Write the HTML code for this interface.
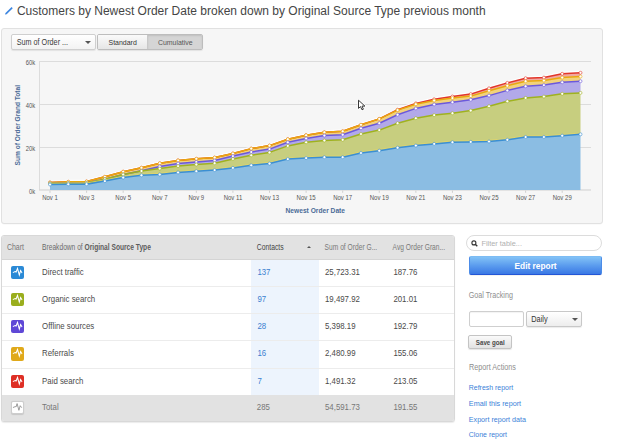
<!DOCTYPE html>
<html><head><meta charset="utf-8"><style>
*{box-sizing:border-box;margin:0;padding:0}
html,body{width:639px;height:443px;overflow:hidden;background:#fff;font-family:"Liberation Sans", sans-serif;position:relative}
.abs{position:absolute}
.panel{position:absolute;left:1px;top:27.9px;width:601.5px;height:196.1px;background:#f6f6f6;border:1px solid #e1e1e1;border-radius:3px;box-shadow:0 0.5px 0.5px rgba(0,0,0,0.04)}
.dd{position:absolute;left:11px;top:34.1px;width:85px;height:15.8px;background:linear-gradient(#fff,#f3f3f3);border:1px solid #cfcfcf;border-radius:2px;box-shadow:0 1px 1px rgba(0,0,0,0.08)}
.arrow{position:absolute;width:0;height:0;border-left:2.4px solid transparent;border-right:2.4px solid transparent;border-top:2.8px solid #555}
.btns{position:absolute;left:97.3px;top:34.1px;width:105.7px;height:15.6px;border:1px solid #bdbdbd;border-radius:2px;overflow:hidden;box-shadow:0 1px 1px rgba(0,0,0,0.08)}
.b1{position:absolute;left:0;top:0;width:49.9px;height:14px;background:linear-gradient(#fafafa,#e6e6e6);border-right:1px solid #c8c8c8}
.b2{position:absolute;left:49.9px;top:0;width:54px;height:14px;background:#d5d5d5;box-shadow:inset 0 1px 2px rgba(0,0,0,0.1)}
.table{position:absolute;left:1.3px;top:235.3px;width:453.3px;height:186.5px;border:1px solid #d8d8d8;border-radius:3px;overflow:hidden;background:#fff;box-shadow:0 1px 1px rgba(0,0,0,0.08)}
.thead{position:absolute;left:0;top:0;width:100%;height:23.5px;background:#e2e2e2;border-bottom:1px solid #d4d4d4}
.hl{position:absolute;left:248.3px;top:23.5px;width:68.6px;height:136px;background:#edf4fd}
.row{position:absolute;left:0;width:100%;height:27.3px;border-bottom:1px solid #ececec}
.row.total{background:#e2e2e2;height:26px;border-bottom:none}
.ic{position:absolute;left:8.9px;top:6.2px;width:13.3px;height:13.3px;border-radius:2px}
.search{position:absolute;left:465.9px;top:235.2px;width:136.1px;height:15.5px;border:1px solid #dcdcdc;border-radius:8px;background:#fff}
.edit{position:absolute;left:468.9px;top:255.8px;width:133.1px;height:18.8px;border-radius:2px;background:linear-gradient(#82c2f6,#5b9cee 50%,#3a78e4);border:1px solid #4c8ce8;border-top-color:#7dbcf4;border-bottom-color:#2356d6;box-shadow:0 0.5px 0.5px rgba(0,0,0,0.1)}
.inp{position:absolute;left:468.8px;top:311.1px;width:55.2px;height:15.6px;border:1px solid #cfcfcf;border-radius:2px;background:#fff;box-shadow:inset 0 1px 1px rgba(0,0,0,0.05)}
.sel{position:absolute;left:526.4px;top:311.1px;width:55.2px;height:15.6px;border:1px solid #c8c8c8;border-radius:2px;background:linear-gradient(#fff,#ededed);box-shadow:0 1px 1px rgba(0,0,0,0.08)}
.save{position:absolute;left:468.3px;top:335.2px;width:43.5px;height:13.4px;border:1px solid #c4c4c4;border-radius:2px;background:linear-gradient(#fafafa,#e2e2e2);box-shadow:0 1px 1px rgba(0,0,0,0.1)}
</style></head><body>
<svg class="abs" style="left:0;top:0" width="16" height="18" viewBox="0 0 16 18"><polygon points="5,14.6 6.67,14.16 12.76,8.24 11.58,7.02 5.49,12.94" fill="#3d86e0"/></svg>
<div class="panel"></div>
<div class="dd"><div class="arrow" style="left:73.2px;top:6.0px;border-left-width:3px;border-right-width:3px;border-top-width:3.4px"></div></div>
<div class="btns"><div class="b1"></div><div class="b2"></div></div>
<svg width="639" height="443" viewBox="0 0 639 443" style="position:absolute;left:0;top:0">
<line x1="39.5" y1="61.5" x2="591" y2="61.5" stroke="#dcdcdc" stroke-width="1"/><line x1="39.5" y1="104.5" x2="591" y2="104.5" stroke="#dcdcdc" stroke-width="1"/><line x1="39.5" y1="147.5" x2="591" y2="147.5" stroke="#dcdcdc" stroke-width="1"/><line x1="39.5" y1="61" x2="39.5" y2="190.5" stroke="#dcdcdc" stroke-width="1"/><line x1="39.5" y1="190.0" x2="591" y2="190.0" stroke="#cfcfcf" stroke-width="1"/>
<polygon points="50.00,184.50 68.29,184.30 86.59,184.20 104.88,181.10 123.17,177.60 141.47,175.30 159.76,174.50 178.05,172.40 196.34,171.20 214.64,170.10 232.93,167.90 251.22,165.30 269.52,163.60 287.81,159.10 306.10,158.10 324.40,157.20 342.69,157.20 360.98,153.00 379.28,150.70 397.57,147.70 415.86,145.60 434.16,143.90 452.45,142.20 470.74,141.90 489.03,141.50 507.33,139.80 525.62,137.00 543.91,137.00 562.21,135.70 580.50,134.30 580.50,189.90 562.21,189.90 543.91,189.90 525.62,189.90 507.33,189.90 489.03,189.90 470.74,189.90 452.45,189.90 434.16,189.90 415.86,189.90 397.57,189.90 379.28,189.90 360.98,189.90 342.69,189.90 324.40,189.90 306.10,189.90 287.81,189.90 269.52,189.90 251.22,189.90 232.93,189.90 214.64,189.90 196.34,189.90 178.05,189.90 159.76,189.90 141.47,189.90 123.17,189.90 104.88,189.90 86.59,189.90 68.29,189.90 50.00,189.90" fill="#8bbde3"/>
<polygon points="50.00,183.50 68.29,183.20 86.59,183.00 104.88,179.20 123.17,174.50 141.47,171.00 159.76,168.60 178.05,166.10 196.34,164.50 214.64,163.20 232.93,159.00 251.22,155.30 269.52,152.40 287.81,145.90 306.10,142.30 324.40,140.50 342.69,139.80 360.98,134.00 379.28,130.10 397.57,123.20 415.86,118.20 434.16,115.10 452.45,113.20 470.74,110.60 489.03,106.20 507.33,101.30 525.62,97.90 543.91,96.60 562.21,93.80 580.50,92.90 580.50,134.30 562.21,135.70 543.91,137.00 525.62,137.00 507.33,139.80 489.03,141.50 470.74,141.90 452.45,142.20 434.16,143.90 415.86,145.60 397.57,147.70 379.28,150.70 360.98,153.00 342.69,157.20 324.40,157.20 306.10,158.10 287.81,159.10 269.52,163.60 251.22,165.30 232.93,167.90 214.64,170.10 196.34,171.20 178.05,172.40 159.76,174.50 141.47,175.30 123.17,177.60 104.88,181.10 86.59,184.20 68.29,184.30 50.00,184.50" fill="#c7ce7f"/>
<polygon points="50.00,183.50 68.29,183.20 86.59,183.00 104.88,179.20 123.17,174.50 141.47,170.80 159.76,166.40 178.05,163.50 196.34,161.90 214.64,160.60 232.93,156.10 251.22,152.00 269.52,149.10 287.81,142.30 306.10,138.40 324.40,135.60 342.69,134.70 360.98,128.30 379.28,123.20 397.57,114.70 415.86,108.40 434.16,104.40 452.45,102.20 470.74,99.70 489.03,95.60 507.33,90.40 525.62,86.30 543.91,85.10 562.21,82.30 580.50,81.20 580.50,92.90 562.21,93.80 543.91,96.60 525.62,97.90 507.33,101.30 489.03,106.20 470.74,110.60 452.45,113.20 434.16,115.10 415.86,118.20 397.57,123.20 379.28,130.10 360.98,134.00 342.69,139.80 324.40,140.50 306.10,142.30 287.81,145.90 269.52,152.40 251.22,155.30 232.93,159.00 214.64,163.20 196.34,164.50 178.05,166.10 159.76,168.60 141.47,171.00 123.17,174.50 104.88,179.20 86.59,183.00 68.29,183.20 50.00,183.50" fill="#b2a9e9"/>
<polygon points="50.00,182.50 68.29,181.80 86.59,181.50 104.88,176.80 123.17,171.70 141.47,167.80 159.76,163.30 178.05,160.40 196.34,158.80 214.64,157.60 232.93,153.50 251.22,148.60 269.52,145.60 287.81,139.20 306.10,135.20 324.40,132.30 342.69,131.30 360.98,124.80 379.28,118.90 397.57,110.10 415.86,104.20 434.16,100.50 452.45,98.10 470.74,96.10 489.03,90.70 507.33,85.70 525.62,81.20 543.91,80.60 562.21,77.60 580.50,76.50 580.50,81.20 562.21,82.30 543.91,85.10 525.62,86.30 507.33,90.40 489.03,95.60 470.74,99.70 452.45,102.20 434.16,104.40 415.86,108.40 397.57,114.70 379.28,123.20 360.98,128.30 342.69,134.70 324.40,135.60 306.10,138.40 287.81,142.30 269.52,149.10 251.22,152.00 232.93,156.10 214.64,160.60 196.34,161.90 178.05,163.50 159.76,166.40 141.47,170.80 123.17,174.50 104.88,179.20 86.59,183.00 68.29,183.20 50.00,183.50" fill="#f1d27c"/>
<polygon points="50.00,182.50 68.29,181.80 86.59,181.50 104.88,176.80 123.17,171.70 141.47,167.80 159.76,163.30 178.05,160.40 196.34,158.80 214.64,157.60 232.93,153.50 251.22,148.60 269.52,145.60 287.81,139.20 306.10,135.20 324.40,132.30 342.69,131.30 360.98,124.80 379.28,118.90 397.57,109.70 415.86,103.40 434.16,99.30 452.45,96.50 470.74,94.10 489.03,88.30 507.33,82.90 525.62,78.20 543.91,77.60 562.21,73.80 580.50,72.80 580.50,76.50 562.21,77.60 543.91,80.60 525.62,81.20 507.33,85.70 489.03,90.70 470.74,96.10 452.45,98.10 434.16,100.50 415.86,104.20 397.57,110.10 379.28,118.90 360.98,124.80 342.69,131.30 324.40,132.30 306.10,135.20 287.81,139.20 269.52,145.60 251.22,148.60 232.93,153.50 214.64,157.60 196.34,158.80 178.05,160.40 159.76,163.30 141.47,167.80 123.17,171.70 104.88,176.80 86.59,181.50 68.29,181.80 50.00,182.50" fill="#f0a8a0"/>
<polyline points="50.00,181.10 68.29,180.40 86.59,180.10 104.88,175.40 123.17,170.30 141.47,166.40 159.76,161.90 178.05,159.00 196.34,157.40 214.64,156.20 232.93,152.10 251.22,147.20 269.52,144.20 287.81,137.80 306.10,133.80 324.40,130.90 342.69,129.90 360.98,123.40 379.28,117.50 397.57,108.30 415.86,102.00 434.16,97.90 452.45,95.10 470.74,92.70 489.03,86.90 507.33,81.50 525.62,76.80 543.91,76.20 562.21,72.40 580.50,71.40" fill="none" stroke="#ffffff" stroke-width="1.2" stroke-opacity="0.85" stroke-linejoin="round"/>
<polyline points="50.00,182.50 68.29,181.80 86.59,181.50 104.88,176.80 123.17,171.70 141.47,167.80 159.76,163.30 178.05,160.40 196.34,158.80 214.64,157.60 232.93,153.50 251.22,148.60 269.52,145.60 287.81,139.20 306.10,135.20 324.40,132.30 342.69,131.30 360.98,124.80 379.28,118.90 397.57,109.70 415.86,103.40 434.16,99.30 452.45,96.50 470.74,94.10 489.03,88.30 507.33,82.90 525.62,78.20 543.91,77.60 562.21,73.80 580.50,72.80" fill="none" stroke="#e2362a" stroke-width="1.5" stroke-linejoin="round"/>
<circle cx="50.00" cy="182.50" r="1.5" fill="#fff" stroke="#e2362a" stroke-width="0.6"/>
<circle cx="68.29" cy="181.80" r="1.5" fill="#fff" stroke="#e2362a" stroke-width="0.6"/>
<circle cx="86.59" cy="181.50" r="1.5" fill="#fff" stroke="#e2362a" stroke-width="0.6"/>
<circle cx="104.88" cy="176.80" r="1.5" fill="#fff" stroke="#e2362a" stroke-width="0.6"/>
<circle cx="123.17" cy="171.70" r="1.5" fill="#fff" stroke="#e2362a" stroke-width="0.6"/>
<circle cx="141.47" cy="167.80" r="1.5" fill="#fff" stroke="#e2362a" stroke-width="0.6"/>
<circle cx="159.76" cy="163.30" r="1.5" fill="#fff" stroke="#e2362a" stroke-width="0.6"/>
<circle cx="178.05" cy="160.40" r="1.5" fill="#fff" stroke="#e2362a" stroke-width="0.6"/>
<circle cx="196.34" cy="158.80" r="1.5" fill="#fff" stroke="#e2362a" stroke-width="0.6"/>
<circle cx="214.64" cy="157.60" r="1.5" fill="#fff" stroke="#e2362a" stroke-width="0.6"/>
<circle cx="232.93" cy="153.50" r="1.5" fill="#fff" stroke="#e2362a" stroke-width="0.6"/>
<circle cx="251.22" cy="148.60" r="1.5" fill="#fff" stroke="#e2362a" stroke-width="0.6"/>
<circle cx="269.52" cy="145.60" r="1.5" fill="#fff" stroke="#e2362a" stroke-width="0.6"/>
<circle cx="287.81" cy="139.20" r="1.5" fill="#fff" stroke="#e2362a" stroke-width="0.6"/>
<circle cx="306.10" cy="135.20" r="1.5" fill="#fff" stroke="#e2362a" stroke-width="0.6"/>
<circle cx="324.40" cy="132.30" r="1.5" fill="#fff" stroke="#e2362a" stroke-width="0.6"/>
<circle cx="342.69" cy="131.30" r="1.5" fill="#fff" stroke="#e2362a" stroke-width="0.6"/>
<circle cx="360.98" cy="124.80" r="1.5" fill="#fff" stroke="#e2362a" stroke-width="0.6"/>
<circle cx="379.28" cy="118.90" r="1.5" fill="#fff" stroke="#e2362a" stroke-width="0.6"/>
<circle cx="397.57" cy="109.70" r="1.5" fill="#fff" stroke="#e2362a" stroke-width="0.6"/>
<circle cx="415.86" cy="103.40" r="1.5" fill="#fff" stroke="#e2362a" stroke-width="0.6"/>
<circle cx="434.16" cy="99.30" r="1.5" fill="#fff" stroke="#e2362a" stroke-width="0.6"/>
<circle cx="452.45" cy="96.50" r="1.5" fill="#fff" stroke="#e2362a" stroke-width="0.6"/>
<circle cx="470.74" cy="94.10" r="1.5" fill="#fff" stroke="#e2362a" stroke-width="0.6"/>
<circle cx="489.03" cy="88.30" r="1.5" fill="#fff" stroke="#e2362a" stroke-width="0.6"/>
<circle cx="507.33" cy="82.90" r="1.5" fill="#fff" stroke="#e2362a" stroke-width="0.6"/>
<circle cx="525.62" cy="78.20" r="1.5" fill="#fff" stroke="#e2362a" stroke-width="0.6"/>
<circle cx="543.91" cy="77.60" r="1.5" fill="#fff" stroke="#e2362a" stroke-width="0.6"/>
<circle cx="562.21" cy="73.80" r="1.5" fill="#fff" stroke="#e2362a" stroke-width="0.6"/>
<circle cx="580.50" cy="72.80" r="1.5" fill="#fff" stroke="#e2362a" stroke-width="0.6"/>
<polyline points="50.00,182.50 68.29,181.80 86.59,181.50 104.88,176.80 123.17,171.70 141.47,167.80 159.76,163.30 178.05,160.40 196.34,158.80 214.64,157.60 232.93,153.50 251.22,148.60 269.52,145.60 287.81,139.20 306.10,135.20 324.40,132.30 342.69,131.30 360.98,124.80 379.28,118.90 397.57,110.10 415.86,104.20 434.16,100.50 452.45,98.10 470.74,96.10 489.03,90.70 507.33,85.70 525.62,81.20 543.91,80.60 562.21,77.60 580.50,76.50" fill="none" stroke="#e9a90e" stroke-width="1.5" stroke-linejoin="round"/>
<circle cx="50.00" cy="182.50" r="1.5" fill="#fff" stroke="#e9a90e" stroke-width="0.6"/>
<circle cx="68.29" cy="181.80" r="1.5" fill="#fff" stroke="#e9a90e" stroke-width="0.6"/>
<circle cx="86.59" cy="181.50" r="1.5" fill="#fff" stroke="#e9a90e" stroke-width="0.6"/>
<circle cx="104.88" cy="176.80" r="1.5" fill="#fff" stroke="#e9a90e" stroke-width="0.6"/>
<circle cx="123.17" cy="171.70" r="1.5" fill="#fff" stroke="#e9a90e" stroke-width="0.6"/>
<circle cx="141.47" cy="167.80" r="1.5" fill="#fff" stroke="#e9a90e" stroke-width="0.6"/>
<circle cx="159.76" cy="163.30" r="1.5" fill="#fff" stroke="#e9a90e" stroke-width="0.6"/>
<circle cx="178.05" cy="160.40" r="1.5" fill="#fff" stroke="#e9a90e" stroke-width="0.6"/>
<circle cx="196.34" cy="158.80" r="1.5" fill="#fff" stroke="#e9a90e" stroke-width="0.6"/>
<circle cx="214.64" cy="157.60" r="1.5" fill="#fff" stroke="#e9a90e" stroke-width="0.6"/>
<circle cx="232.93" cy="153.50" r="1.5" fill="#fff" stroke="#e9a90e" stroke-width="0.6"/>
<circle cx="251.22" cy="148.60" r="1.5" fill="#fff" stroke="#e9a90e" stroke-width="0.6"/>
<circle cx="269.52" cy="145.60" r="1.5" fill="#fff" stroke="#e9a90e" stroke-width="0.6"/>
<circle cx="287.81" cy="139.20" r="1.5" fill="#fff" stroke="#e9a90e" stroke-width="0.6"/>
<circle cx="306.10" cy="135.20" r="1.5" fill="#fff" stroke="#e9a90e" stroke-width="0.6"/>
<circle cx="324.40" cy="132.30" r="1.5" fill="#fff" stroke="#e9a90e" stroke-width="0.6"/>
<circle cx="342.69" cy="131.30" r="1.5" fill="#fff" stroke="#e9a90e" stroke-width="0.6"/>
<circle cx="360.98" cy="124.80" r="1.5" fill="#fff" stroke="#e9a90e" stroke-width="0.6"/>
<circle cx="379.28" cy="118.90" r="1.5" fill="#fff" stroke="#e9a90e" stroke-width="0.6"/>
<circle cx="397.57" cy="110.10" r="1.5" fill="#fff" stroke="#e9a90e" stroke-width="0.6"/>
<circle cx="415.86" cy="104.20" r="1.5" fill="#fff" stroke="#e9a90e" stroke-width="0.6"/>
<circle cx="434.16" cy="100.50" r="1.5" fill="#fff" stroke="#e9a90e" stroke-width="0.6"/>
<circle cx="452.45" cy="98.10" r="1.5" fill="#fff" stroke="#e9a90e" stroke-width="0.6"/>
<circle cx="470.74" cy="96.10" r="1.5" fill="#fff" stroke="#e9a90e" stroke-width="0.6"/>
<circle cx="489.03" cy="90.70" r="1.5" fill="#fff" stroke="#e9a90e" stroke-width="0.6"/>
<circle cx="507.33" cy="85.70" r="1.5" fill="#fff" stroke="#e9a90e" stroke-width="0.6"/>
<circle cx="525.62" cy="81.20" r="1.5" fill="#fff" stroke="#e9a90e" stroke-width="0.6"/>
<circle cx="543.91" cy="80.60" r="1.5" fill="#fff" stroke="#e9a90e" stroke-width="0.6"/>
<circle cx="562.21" cy="77.60" r="1.5" fill="#fff" stroke="#e9a90e" stroke-width="0.6"/>
<circle cx="580.50" cy="76.50" r="1.5" fill="#fff" stroke="#e9a90e" stroke-width="0.6"/>
<polyline points="50.00,183.50 68.29,183.20 86.59,183.00 104.88,179.20 123.17,174.50 141.47,170.80 159.76,166.40 178.05,163.50 196.34,161.90 214.64,160.60 232.93,156.10 251.22,152.00 269.52,149.10 287.81,142.30 306.10,138.40 324.40,135.60 342.69,134.70 360.98,128.30 379.28,123.20 397.57,114.70 415.86,108.40 434.16,104.40 452.45,102.20 470.74,99.70 489.03,95.60 507.33,90.40 525.62,86.30 543.91,85.10 562.21,82.30 580.50,81.20" fill="none" stroke="#6b58dc" stroke-width="1.5" stroke-linejoin="round"/>
<circle cx="50.00" cy="183.50" r="1.5" fill="#fff" stroke="#6b58dc" stroke-width="0.6"/>
<circle cx="68.29" cy="183.20" r="1.5" fill="#fff" stroke="#6b58dc" stroke-width="0.6"/>
<circle cx="86.59" cy="183.00" r="1.5" fill="#fff" stroke="#6b58dc" stroke-width="0.6"/>
<circle cx="104.88" cy="179.20" r="1.5" fill="#fff" stroke="#6b58dc" stroke-width="0.6"/>
<circle cx="123.17" cy="174.50" r="1.5" fill="#fff" stroke="#6b58dc" stroke-width="0.6"/>
<circle cx="141.47" cy="170.80" r="1.5" fill="#fff" stroke="#6b58dc" stroke-width="0.6"/>
<circle cx="159.76" cy="166.40" r="1.5" fill="#fff" stroke="#6b58dc" stroke-width="0.6"/>
<circle cx="178.05" cy="163.50" r="1.5" fill="#fff" stroke="#6b58dc" stroke-width="0.6"/>
<circle cx="196.34" cy="161.90" r="1.5" fill="#fff" stroke="#6b58dc" stroke-width="0.6"/>
<circle cx="214.64" cy="160.60" r="1.5" fill="#fff" stroke="#6b58dc" stroke-width="0.6"/>
<circle cx="232.93" cy="156.10" r="1.5" fill="#fff" stroke="#6b58dc" stroke-width="0.6"/>
<circle cx="251.22" cy="152.00" r="1.5" fill="#fff" stroke="#6b58dc" stroke-width="0.6"/>
<circle cx="269.52" cy="149.10" r="1.5" fill="#fff" stroke="#6b58dc" stroke-width="0.6"/>
<circle cx="287.81" cy="142.30" r="1.5" fill="#fff" stroke="#6b58dc" stroke-width="0.6"/>
<circle cx="306.10" cy="138.40" r="1.5" fill="#fff" stroke="#6b58dc" stroke-width="0.6"/>
<circle cx="324.40" cy="135.60" r="1.5" fill="#fff" stroke="#6b58dc" stroke-width="0.6"/>
<circle cx="342.69" cy="134.70" r="1.5" fill="#fff" stroke="#6b58dc" stroke-width="0.6"/>
<circle cx="360.98" cy="128.30" r="1.5" fill="#fff" stroke="#6b58dc" stroke-width="0.6"/>
<circle cx="379.28" cy="123.20" r="1.5" fill="#fff" stroke="#6b58dc" stroke-width="0.6"/>
<circle cx="397.57" cy="114.70" r="1.5" fill="#fff" stroke="#6b58dc" stroke-width="0.6"/>
<circle cx="415.86" cy="108.40" r="1.5" fill="#fff" stroke="#6b58dc" stroke-width="0.6"/>
<circle cx="434.16" cy="104.40" r="1.5" fill="#fff" stroke="#6b58dc" stroke-width="0.6"/>
<circle cx="452.45" cy="102.20" r="1.5" fill="#fff" stroke="#6b58dc" stroke-width="0.6"/>
<circle cx="470.74" cy="99.70" r="1.5" fill="#fff" stroke="#6b58dc" stroke-width="0.6"/>
<circle cx="489.03" cy="95.60" r="1.5" fill="#fff" stroke="#6b58dc" stroke-width="0.6"/>
<circle cx="507.33" cy="90.40" r="1.5" fill="#fff" stroke="#6b58dc" stroke-width="0.6"/>
<circle cx="525.62" cy="86.30" r="1.5" fill="#fff" stroke="#6b58dc" stroke-width="0.6"/>
<circle cx="543.91" cy="85.10" r="1.5" fill="#fff" stroke="#6b58dc" stroke-width="0.6"/>
<circle cx="562.21" cy="82.30" r="1.5" fill="#fff" stroke="#6b58dc" stroke-width="0.6"/>
<circle cx="580.50" cy="81.20" r="1.5" fill="#fff" stroke="#6b58dc" stroke-width="0.6"/>
<polyline points="50.00,183.50 68.29,183.20 86.59,183.00 104.88,179.20 123.17,174.50 141.47,171.00 159.76,168.60 178.05,166.10 196.34,164.50 214.64,163.20 232.93,159.00 251.22,155.30 269.52,152.40 287.81,145.90 306.10,142.30 324.40,140.50 342.69,139.80 360.98,134.00 379.28,130.10 397.57,123.20 415.86,118.20 434.16,115.10 452.45,113.20 470.74,110.60 489.03,106.20 507.33,101.30 525.62,97.90 543.91,96.60 562.21,93.80 580.50,92.90" fill="none" stroke="#9fb21f" stroke-width="1.5" stroke-linejoin="round"/>
<circle cx="50.00" cy="183.50" r="1.5" fill="#fff" stroke="#9fb21f" stroke-width="0.6"/>
<circle cx="68.29" cy="183.20" r="1.5" fill="#fff" stroke="#9fb21f" stroke-width="0.6"/>
<circle cx="86.59" cy="183.00" r="1.5" fill="#fff" stroke="#9fb21f" stroke-width="0.6"/>
<circle cx="104.88" cy="179.20" r="1.5" fill="#fff" stroke="#9fb21f" stroke-width="0.6"/>
<circle cx="123.17" cy="174.50" r="1.5" fill="#fff" stroke="#9fb21f" stroke-width="0.6"/>
<circle cx="141.47" cy="171.00" r="1.5" fill="#fff" stroke="#9fb21f" stroke-width="0.6"/>
<circle cx="159.76" cy="168.60" r="1.5" fill="#fff" stroke="#9fb21f" stroke-width="0.6"/>
<circle cx="178.05" cy="166.10" r="1.5" fill="#fff" stroke="#9fb21f" stroke-width="0.6"/>
<circle cx="196.34" cy="164.50" r="1.5" fill="#fff" stroke="#9fb21f" stroke-width="0.6"/>
<circle cx="214.64" cy="163.20" r="1.5" fill="#fff" stroke="#9fb21f" stroke-width="0.6"/>
<circle cx="232.93" cy="159.00" r="1.5" fill="#fff" stroke="#9fb21f" stroke-width="0.6"/>
<circle cx="251.22" cy="155.30" r="1.5" fill="#fff" stroke="#9fb21f" stroke-width="0.6"/>
<circle cx="269.52" cy="152.40" r="1.5" fill="#fff" stroke="#9fb21f" stroke-width="0.6"/>
<circle cx="287.81" cy="145.90" r="1.5" fill="#fff" stroke="#9fb21f" stroke-width="0.6"/>
<circle cx="306.10" cy="142.30" r="1.5" fill="#fff" stroke="#9fb21f" stroke-width="0.6"/>
<circle cx="324.40" cy="140.50" r="1.5" fill="#fff" stroke="#9fb21f" stroke-width="0.6"/>
<circle cx="342.69" cy="139.80" r="1.5" fill="#fff" stroke="#9fb21f" stroke-width="0.6"/>
<circle cx="360.98" cy="134.00" r="1.5" fill="#fff" stroke="#9fb21f" stroke-width="0.6"/>
<circle cx="379.28" cy="130.10" r="1.5" fill="#fff" stroke="#9fb21f" stroke-width="0.6"/>
<circle cx="397.57" cy="123.20" r="1.5" fill="#fff" stroke="#9fb21f" stroke-width="0.6"/>
<circle cx="415.86" cy="118.20" r="1.5" fill="#fff" stroke="#9fb21f" stroke-width="0.6"/>
<circle cx="434.16" cy="115.10" r="1.5" fill="#fff" stroke="#9fb21f" stroke-width="0.6"/>
<circle cx="452.45" cy="113.20" r="1.5" fill="#fff" stroke="#9fb21f" stroke-width="0.6"/>
<circle cx="470.74" cy="110.60" r="1.5" fill="#fff" stroke="#9fb21f" stroke-width="0.6"/>
<circle cx="489.03" cy="106.20" r="1.5" fill="#fff" stroke="#9fb21f" stroke-width="0.6"/>
<circle cx="507.33" cy="101.30" r="1.5" fill="#fff" stroke="#9fb21f" stroke-width="0.6"/>
<circle cx="525.62" cy="97.90" r="1.5" fill="#fff" stroke="#9fb21f" stroke-width="0.6"/>
<circle cx="543.91" cy="96.60" r="1.5" fill="#fff" stroke="#9fb21f" stroke-width="0.6"/>
<circle cx="562.21" cy="93.80" r="1.5" fill="#fff" stroke="#9fb21f" stroke-width="0.6"/>
<circle cx="580.50" cy="92.90" r="1.5" fill="#fff" stroke="#9fb21f" stroke-width="0.6"/>
<polyline points="50.00,183.30 68.29,183.10 86.59,183.00 104.88,179.90 123.17,176.40 141.47,174.10 159.76,173.30 178.05,171.20 196.34,170.00 214.64,168.90 232.93,166.70 251.22,164.10 269.52,162.40 287.81,157.90 306.10,156.90 324.40,156.00 342.69,156.00 360.98,151.80 379.28,149.50 397.57,146.50 415.86,144.40 434.16,142.70 452.45,141.00 470.74,140.70 489.03,140.30 507.33,138.60 525.62,135.80 543.91,135.80 562.21,134.50 580.50,133.10" fill="none" stroke="#e2d66a" stroke-width="0.8" stroke-linejoin="round"/>
<polyline points="50.00,184.50 68.29,184.30 86.59,184.20 104.88,181.10 123.17,177.60 141.47,175.30 159.76,174.50 178.05,172.40 196.34,171.20 214.64,170.10 232.93,167.90 251.22,165.30 269.52,163.60 287.81,159.10 306.10,158.10 324.40,157.20 342.69,157.20 360.98,153.00 379.28,150.70 397.57,147.70 415.86,145.60 434.16,143.90 452.45,142.20 470.74,141.90 489.03,141.50 507.33,139.80 525.62,137.00 543.91,137.00 562.21,135.70 580.50,134.30" fill="none" stroke="#3b8fd3" stroke-width="1.5" stroke-linejoin="round"/>
<circle cx="50.00" cy="184.50" r="1.5" fill="#fff" stroke="#3b8fd3" stroke-width="0.6"/>
<circle cx="68.29" cy="184.30" r="1.5" fill="#fff" stroke="#3b8fd3" stroke-width="0.6"/>
<circle cx="86.59" cy="184.20" r="1.5" fill="#fff" stroke="#3b8fd3" stroke-width="0.6"/>
<circle cx="104.88" cy="181.10" r="1.5" fill="#fff" stroke="#3b8fd3" stroke-width="0.6"/>
<circle cx="123.17" cy="177.60" r="1.5" fill="#fff" stroke="#3b8fd3" stroke-width="0.6"/>
<circle cx="141.47" cy="175.30" r="1.5" fill="#fff" stroke="#3b8fd3" stroke-width="0.6"/>
<circle cx="159.76" cy="174.50" r="1.5" fill="#fff" stroke="#3b8fd3" stroke-width="0.6"/>
<circle cx="178.05" cy="172.40" r="1.5" fill="#fff" stroke="#3b8fd3" stroke-width="0.6"/>
<circle cx="196.34" cy="171.20" r="1.5" fill="#fff" stroke="#3b8fd3" stroke-width="0.6"/>
<circle cx="214.64" cy="170.10" r="1.5" fill="#fff" stroke="#3b8fd3" stroke-width="0.6"/>
<circle cx="232.93" cy="167.90" r="1.5" fill="#fff" stroke="#3b8fd3" stroke-width="0.6"/>
<circle cx="251.22" cy="165.30" r="1.5" fill="#fff" stroke="#3b8fd3" stroke-width="0.6"/>
<circle cx="269.52" cy="163.60" r="1.5" fill="#fff" stroke="#3b8fd3" stroke-width="0.6"/>
<circle cx="287.81" cy="159.10" r="1.5" fill="#fff" stroke="#3b8fd3" stroke-width="0.6"/>
<circle cx="306.10" cy="158.10" r="1.5" fill="#fff" stroke="#3b8fd3" stroke-width="0.6"/>
<circle cx="324.40" cy="157.20" r="1.5" fill="#fff" stroke="#3b8fd3" stroke-width="0.6"/>
<circle cx="342.69" cy="157.20" r="1.5" fill="#fff" stroke="#3b8fd3" stroke-width="0.6"/>
<circle cx="360.98" cy="153.00" r="1.5" fill="#fff" stroke="#3b8fd3" stroke-width="0.6"/>
<circle cx="379.28" cy="150.70" r="1.5" fill="#fff" stroke="#3b8fd3" stroke-width="0.6"/>
<circle cx="397.57" cy="147.70" r="1.5" fill="#fff" stroke="#3b8fd3" stroke-width="0.6"/>
<circle cx="415.86" cy="145.60" r="1.5" fill="#fff" stroke="#3b8fd3" stroke-width="0.6"/>
<circle cx="434.16" cy="143.90" r="1.5" fill="#fff" stroke="#3b8fd3" stroke-width="0.6"/>
<circle cx="452.45" cy="142.20" r="1.5" fill="#fff" stroke="#3b8fd3" stroke-width="0.6"/>
<circle cx="470.74" cy="141.90" r="1.5" fill="#fff" stroke="#3b8fd3" stroke-width="0.6"/>
<circle cx="489.03" cy="141.50" r="1.5" fill="#fff" stroke="#3b8fd3" stroke-width="0.6"/>
<circle cx="507.33" cy="139.80" r="1.5" fill="#fff" stroke="#3b8fd3" stroke-width="0.6"/>
<circle cx="525.62" cy="137.00" r="1.5" fill="#fff" stroke="#3b8fd3" stroke-width="0.6"/>
<circle cx="543.91" cy="137.00" r="1.5" fill="#fff" stroke="#3b8fd3" stroke-width="0.6"/>
<circle cx="562.21" cy="135.70" r="1.5" fill="#fff" stroke="#3b8fd3" stroke-width="0.6"/>
<circle cx="580.50" cy="134.30" r="1.5" fill="#fff" stroke="#3b8fd3" stroke-width="0.6"/>
<line x1="50.00" y1="190.5" x2="50.00" y2="192.8" stroke="#cfcfcf" stroke-width="1"/><line x1="86.59" y1="190.5" x2="86.59" y2="192.8" stroke="#cfcfcf" stroke-width="1"/><line x1="123.17" y1="190.5" x2="123.17" y2="192.8" stroke="#cfcfcf" stroke-width="1"/><line x1="159.76" y1="190.5" x2="159.76" y2="192.8" stroke="#cfcfcf" stroke-width="1"/><line x1="196.34" y1="190.5" x2="196.34" y2="192.8" stroke="#cfcfcf" stroke-width="1"/><line x1="232.93" y1="190.5" x2="232.93" y2="192.8" stroke="#cfcfcf" stroke-width="1"/><line x1="269.52" y1="190.5" x2="269.52" y2="192.8" stroke="#cfcfcf" stroke-width="1"/><line x1="306.10" y1="190.5" x2="306.10" y2="192.8" stroke="#cfcfcf" stroke-width="1"/><line x1="342.69" y1="190.5" x2="342.69" y2="192.8" stroke="#cfcfcf" stroke-width="1"/><line x1="379.28" y1="190.5" x2="379.28" y2="192.8" stroke="#cfcfcf" stroke-width="1"/><line x1="415.86" y1="190.5" x2="415.86" y2="192.8" stroke="#cfcfcf" stroke-width="1"/><line x1="452.45" y1="190.5" x2="452.45" y2="192.8" stroke="#cfcfcf" stroke-width="1"/><line x1="489.03" y1="190.5" x2="489.03" y2="192.8" stroke="#cfcfcf" stroke-width="1"/><line x1="525.62" y1="190.5" x2="525.62" y2="192.8" stroke="#cfcfcf" stroke-width="1"/><line x1="562.21" y1="190.5" x2="562.21" y2="192.8" stroke="#cfcfcf" stroke-width="1"/>
</svg>
<div class="table">
<div class="thead">
<div class="arrow" style="left:304.7px;top:9.3px;border-top:none;border-bottom:2.8px solid #555;border-left-width:2.5px;border-right-width:2.5px"></div>
</div>
<div class="hl"></div>
<div class="row" style="top:23.1px"><div class="ic" style="background:#2b8ad6"><svg width="13" height="13" viewBox="0 0 13 13" style="position:absolute;left:0;top:0"><path d="M2.3 6.4 L4.1 5.5 L5.1 6.0 L6.5 2.4 L8.3 9.0 L9.6 4.5 L10.8 6.6" fill="none" stroke="#fff" stroke-width="1.05" stroke-linejoin="miter" stroke-linecap="round"/></svg></div></div><div class="row" style="top:50.4px"><div class="ic" style="background:#9aae1d"><svg width="13" height="13" viewBox="0 0 13 13" style="position:absolute;left:0;top:0"><path d="M2.3 6.4 L4.1 5.5 L5.1 6.0 L6.5 2.4 L8.3 9.0 L9.6 4.5 L10.8 6.6" fill="none" stroke="#fff" stroke-width="1.05" stroke-linejoin="miter" stroke-linecap="round"/></svg></div></div><div class="row" style="top:77.7px"><div class="ic" style="background:#5f48d6"><svg width="13" height="13" viewBox="0 0 13 13" style="position:absolute;left:0;top:0"><path d="M2.3 6.4 L4.1 5.5 L5.1 6.0 L6.5 2.4 L8.3 9.0 L9.6 4.5 L10.8 6.6" fill="none" stroke="#fff" stroke-width="1.05" stroke-linejoin="miter" stroke-linecap="round"/></svg></div></div><div class="row" style="top:105.0px"><div class="ic" style="background:#e0a91a"><svg width="13" height="13" viewBox="0 0 13 13" style="position:absolute;left:0;top:0"><path d="M2.3 6.4 L4.1 5.5 L5.1 6.0 L6.5 2.4 L8.3 9.0 L9.6 4.5 L10.8 6.6" fill="none" stroke="#fff" stroke-width="1.05" stroke-linejoin="miter" stroke-linecap="round"/></svg></div></div><div class="row" style="top:132.3px"><div class="ic" style="background:#de2f25"><svg width="13" height="13" viewBox="0 0 13 13" style="position:absolute;left:0;top:0"><path d="M2.3 6.4 L4.1 5.5 L5.1 6.0 L6.5 2.4 L8.3 9.0 L9.6 4.5 L10.8 6.6" fill="none" stroke="#fff" stroke-width="1.05" stroke-linejoin="miter" stroke-linecap="round"/></svg></div></div>
<div class="row total" style="top:159.0px"><div class="ic" style="background:#fff;border:1px solid #cdcdcd;top:5.9px;box-shadow:0 0.5px 1px rgba(0,0,0,0.12)"><svg width="11.3" height="11.3" viewBox="0 0 11.3 11.3" style="position:absolute;left:0;top:0;overflow:visible"><path d="M1.3 5.4 L3.3 4.6 L4.0 5.0 L5.1 1.6 L6.9 8.3 L8.2 3.7 L9.5 5.4" fill="none" stroke="#8a8a8a" stroke-width="0.85" stroke-linecap="round"/></svg></div></div>
</div>
<div class="search"><svg class="abs" style="left:4.5px;top:3.8px" width="7" height="7" viewBox="0 0 7 7"><circle cx="2.9" cy="2.9" r="2" fill="none" stroke="#333" stroke-width="1.1"/><path d="M4.3 4.3 L6.3 6.3" stroke="#333" stroke-width="1.3"/></svg></div>
<div class="edit"></div>
<div class="inp"></div>
<div class="sel"><div class="arrow" style="left:44.6px;top:5.8px;border-top-color:#555;border-left-width:3.1px;border-right-width:3.1px;border-top-width:3.2px"></div></div>
<div class="save"></div>
<svg width="639" height="443" viewBox="0 0 639 443" style="position:absolute;left:0;top:0" font-family='"Liberation Sans", sans-serif'>
<text transform="translate(16.90,14.75) scale(1.0,1)" font-size="12" fill="#454545">Customers by Newest Order Date broken down by Original Source Type previous month</text><text transform="translate(16.70,44.90) scale(0.882,1)" font-size="8.2" fill="#3a3a3a">Sum of Order ...</text><text transform="translate(108.50,44.75) scale(0.93,1)" font-size="7.5" fill="#333">Standard</text><text transform="translate(157.90,44.75) scale(0.928,1)" font-size="7.5" fill="#555">Cumulative</text><text transform="translate(50.00,200.00) scale(0.86,1)" font-size="7.0" fill="#555" text-anchor="middle">Nov 1</text><text transform="translate(86.59,200.00) scale(0.86,1)" font-size="7.0" fill="#555" text-anchor="middle">Nov 3</text><text transform="translate(123.17,200.00) scale(0.86,1)" font-size="7.0" fill="#555" text-anchor="middle">Nov 5</text><text transform="translate(159.76,200.00) scale(0.86,1)" font-size="7.0" fill="#555" text-anchor="middle">Nov 7</text><text transform="translate(196.34,200.00) scale(0.86,1)" font-size="7.0" fill="#555" text-anchor="middle">Nov 9</text><text transform="translate(232.93,200.00) scale(0.86,1)" font-size="7.0" fill="#555" text-anchor="middle">Nov 11</text><text transform="translate(269.52,200.00) scale(0.86,1)" font-size="7.0" fill="#555" text-anchor="middle">Nov 13</text><text transform="translate(306.10,200.00) scale(0.86,1)" font-size="7.0" fill="#555" text-anchor="middle">Nov 15</text><text transform="translate(342.69,200.00) scale(0.86,1)" font-size="7.0" fill="#555" text-anchor="middle">Nov 17</text><text transform="translate(379.28,200.00) scale(0.86,1)" font-size="7.0" fill="#555" text-anchor="middle">Nov 19</text><text transform="translate(415.86,200.00) scale(0.86,1)" font-size="7.0" fill="#555" text-anchor="middle">Nov 21</text><text transform="translate(452.45,200.00) scale(0.86,1)" font-size="7.0" fill="#555" text-anchor="middle">Nov 23</text><text transform="translate(489.03,200.00) scale(0.86,1)" font-size="7.0" fill="#555" text-anchor="middle">Nov 25</text><text transform="translate(525.62,200.00) scale(0.86,1)" font-size="7.0" fill="#555" text-anchor="middle">Nov 27</text><text transform="translate(562.21,200.00) scale(0.86,1)" font-size="7.0" fill="#555" text-anchor="middle">Nov 29</text><text transform="translate(35.20,64.60) scale(0.91,1)" font-size="6.4" fill="#555" text-anchor="end">60k</text><text transform="translate(35.20,107.70) scale(0.91,1)" font-size="6.4" fill="#555" text-anchor="end">40k</text><text transform="translate(35.20,150.80) scale(0.91,1)" font-size="6.4" fill="#555" text-anchor="end">20k</text><text transform="translate(35.20,193.90) scale(0.91,1)" font-size="6.4" fill="#555" text-anchor="end">0k</text><text transform="translate(315.30,212.60) scale(0.888,1)" font-size="7.5" fill="#4b6b96" font-weight="bold" text-anchor="middle">Newest Order Date</text><text transform="translate(20.40,125.20) rotate(-90) scale(0.816,1)" font-size="8.1" fill="#4b6b96" font-weight="bold" text-anchor="middle">Sum of Order Grand Total</text><text transform="translate(6.90,249.70) scale(0.856,1)" font-size="8.2" fill="#777">Chart</text><text transform="translate(42.10,249.60) scale(0.811,1)" font-size="8.2" fill="#6c6c6c">Breakdown of <tspan font-weight="bold" fill="#5c5c5c">Original Source Type</tspan></text><text transform="translate(256.80,249.50) scale(0.831,1)" font-size="8.2" fill="#444">Contacts</text><text transform="translate(324.60,249.60) scale(0.814,1)" font-size="8.2" fill="#7a7a7a">Sum of Order G...</text><text transform="translate(392.60,249.60) scale(0.813,1)" font-size="8.2" fill="#7a7a7a">Avg Order Gran...</text><text transform="translate(42.10,274.50) scale(0.912,1)" font-size="8.6" fill="#4a4a4a">Direct traffic</text><text transform="translate(257.40,274.50) scale(0.912,1)" font-size="8.6" fill="#3b7fd0">137</text><text transform="translate(325.00,274.50) scale(0.912,1)" font-size="8.6" fill="#4a4a4a">25,723.31</text><text transform="translate(393.40,274.50) scale(0.912,1)" font-size="8.6" fill="#4a4a4a">187.76</text><text transform="translate(42.10,301.80) scale(0.912,1)" font-size="8.6" fill="#4a4a4a">Organic search</text><text transform="translate(257.40,301.80) scale(0.912,1)" font-size="8.6" fill="#3b7fd0">97</text><text transform="translate(325.00,301.80) scale(0.912,1)" font-size="8.6" fill="#4a4a4a">19,497.92</text><text transform="translate(393.40,301.80) scale(0.912,1)" font-size="8.6" fill="#4a4a4a">201.01</text><text transform="translate(42.10,329.10) scale(0.912,1)" font-size="8.6" fill="#4a4a4a">Offline sources</text><text transform="translate(257.40,329.10) scale(0.912,1)" font-size="8.6" fill="#3b7fd0">28</text><text transform="translate(325.00,329.10) scale(0.912,1)" font-size="8.6" fill="#4a4a4a">5,398.19</text><text transform="translate(393.40,329.10) scale(0.912,1)" font-size="8.6" fill="#4a4a4a">192.79</text><text transform="translate(42.10,356.40) scale(0.912,1)" font-size="8.6" fill="#4a4a4a">Referrals</text><text transform="translate(257.40,356.40) scale(0.912,1)" font-size="8.6" fill="#3b7fd0">16</text><text transform="translate(325.00,356.40) scale(0.912,1)" font-size="8.6" fill="#4a4a4a">2,480.99</text><text transform="translate(393.40,356.40) scale(0.912,1)" font-size="8.6" fill="#4a4a4a">155.06</text><text transform="translate(42.10,383.70) scale(0.912,1)" font-size="8.6" fill="#4a4a4a">Paid search</text><text transform="translate(257.40,383.70) scale(0.912,1)" font-size="8.6" fill="#3b7fd0">7</text><text transform="translate(325.00,383.70) scale(0.912,1)" font-size="8.6" fill="#4a4a4a">1,491.32</text><text transform="translate(393.40,383.70) scale(0.912,1)" font-size="8.6" fill="#4a4a4a">213.05</text><text transform="translate(42.10,410.30) scale(0.912,1)" font-size="8.6" fill="#777">Total</text><text transform="translate(256.80,410.30) scale(0.912,1)" font-size="8.6" fill="#777">285</text><text transform="translate(325.00,410.30) scale(0.912,1)" font-size="8.6" fill="#777">54,591.73</text><text transform="translate(393.40,410.30) scale(0.912,1)" font-size="8.6" fill="#777">191.55</text><text transform="translate(481.40,245.80) scale(0.922,1)" font-size="8.0" fill="#b0b0b0">Filter table...</text><text transform="translate(535.60,268.70) scale(0.927,1)" font-size="9.0" fill="#fff" font-weight="bold" text-anchor="middle">Edit report</text><text transform="translate(468.80,297.90) scale(0.872,1)" font-size="8.2" fill="#8e8e8e">Goal Tracking</text><text transform="translate(531.20,322.10) scale(0.9,1)" font-size="8.2" fill="#333">Daily</text><text transform="translate(490.30,344.50) scale(0.94,1)" font-size="6.6" fill="#4a4a4a" font-weight="bold" text-anchor="middle">Save goal</text><text transform="translate(469.00,370.30) scale(0.872,1)" font-size="8.3" fill="#8e8e8e">Report Actions</text><text transform="translate(468.80,390.30) scale(0.87,1)" font-size="8.0" fill="#3b7fd8">Refresh report</text><text transform="translate(468.80,405.90) scale(0.9065624999999999,1)" font-size="8.0" fill="#3b7fd8">Email this report</text><text transform="translate(468.80,421.50) scale(0.8934375,1)" font-size="8.0" fill="#3b7fd8">Export report data</text><text transform="translate(468.80,437.10) scale(0.87,1)" font-size="8.0" fill="#3b7fd8">Clone report</text>
<path d="M358.5 100.2 L358.5 108.4 L360.5 106.6 L362 109.8 L363.4 109.2 L362 106.1 L364.9 106.1 Z" fill="#fff" stroke="#fff" stroke-width="2.2" stroke-linejoin="round"/><path d="M358.5 100.2 L358.5 108.4 L360.5 106.6 L362 109.8 L363.4 109.2 L362 106.1 L364.9 106.1 Z" fill="#fff" stroke="#222" stroke-width="0.9" stroke-linejoin="round"/>
</svg>
</body></html>
